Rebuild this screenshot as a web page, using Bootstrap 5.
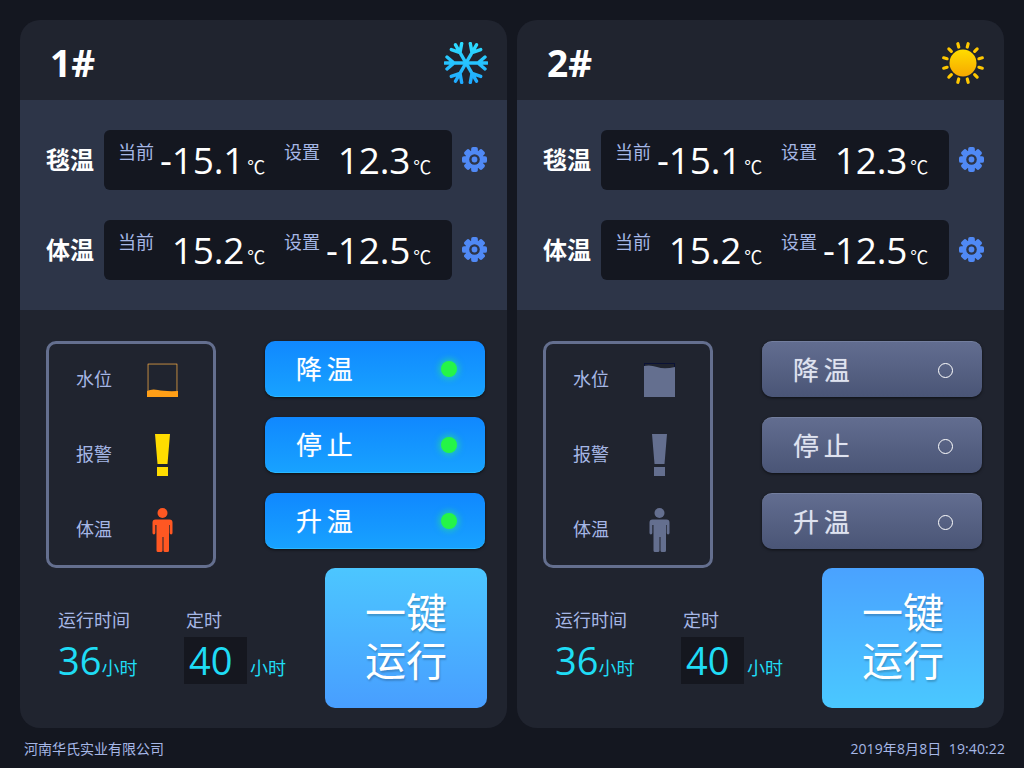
<!DOCTYPE html>
<html lang="zh-CN">
<head>
    <meta charset="UTF-8">
    <meta name="viewport" content="width=device-width, initial-scale=1">
    <title>河南华氏实业</title>
    <link href="https://cdn.jsdelivr.net/npm/bootstrap@5.3.0/dist/css/bootstrap.min.css" rel="stylesheet">
    <style>
        html, body { height: 100%; }
        body { background: #141720; color: #a6b7e6; font-family: "Open Sans", "Noto Sans CJK SC", sans-serif; padding: 20px 20px 0 20px; overflow: hidden; }
        .panels { gap: 10px; }
        .panel { width: 487px; height: 708px; background: #20242f; border-radius: 20px; overflow: hidden; }
        .panel-head { height: 80px; padding: 0 19px 0 30px; }
        .panel-no { font-family: "Open Sans", sans-serif; font-size: 37px; font-weight: 700; color: #fff; line-height: 1; margin-top: 4px; }
        .head-icon { margin-top: 6px; }
        .band { height: 210px; background: #2d3548; padding: 30px 20px 0 26px; }
        .temp-row { height: 60px; margin-bottom: 30px; }
        .temp-name { width: 58px; font-size: 24px; font-weight: 700; color: #fff; line-height: 1; }
        .temp-box { width: 348px; height: 60px; background: #141720; border-radius: 6px; padding: 0 21px 0 14px; margin-right: 10px; }
        .temp-cell { width: 147px; }
        .temp-cell + .temp-cell { margin-left: 19px; }
        .temp-label { font-size: 18px; line-height: 24px; margin-top: 10px; }
        .temp-val { margin-left: auto; color: #fff; font-size: 37px; font-weight: 400; line-height: 60px; white-space: nowrap; letter-spacing: -.2px; }
        .temp-val small { font-size: 18px; margin-left: 3px; }
        .gear-ico { margin-top: -2px; }
        .lower { padding: 31px 20px 0 26px; }
        .stat-box { width: 170px; height: 227px; border: 3px solid #646f8f; border-radius: 10px; padding: 0 34px 0 27px; }
        .stat-row { height: 75px; }
        .stat-row span { font-size: 18px; }
        .stat-icon { width: 33px; }
        .mode-list { margin-left: 49px; width: 220px; gap: 20px; }
        .mode-btn { height: 56px; border-radius: 10px; padding: 1px 28px 0 31px; color: #fff; font-size: 26px; letter-spacing: -1px; text-shadow: 0 0 1px rgba(255,255,255,.45); box-shadow: 0 1px 3px rgba(0,0,0,.6); }
        .mode-on { background: linear-gradient(#1088ff, #18a2ff); border-bottom: 1px solid #2ab8ff; }
        .mode-off { background: linear-gradient(#626d90, #4a5576); color: #dfe3f0; border-top: 1px solid #737e9e; }
        .lamp { width: 16px; height: 16px; border-radius: 50%; }
        .lamp-on { background: #25f547; box-shadow: 0 0 6px 2px rgba(40,240,120,.55); }
        .lamp-off { width: 15px; height: 15px; border: 1.5px solid #fff; margin-right: 1px; }
        .time-area { padding: 41px 0 0 12px; }
        .time-col1 { width: 126px; }
        .time-label { font-size: 18px; line-height: 22px; }
        .time-col2 .time-label { padding-left: 2px; }
        .time-val { color: #1fdcf5; font-size: 38px; line-height: 47px; margin-top: 6px; white-space: nowrap; }
        .time-val small { font-size: 18px; }
        .time-input { display: inline-block; width: 63px; height: 47px; background: #15171f; padding-left: 5px; margin-right: 3px; }
        .one-key { width: 162px; height: 140px; border-radius: 10px; color: #fff; font-family: "Liberation Sans", "Noto Sans CJK SC", sans-serif; font-size: 41px; line-height: 48px; text-shadow: 1px 2px 2px rgba(0,0,0,.2); }
        .key-a { background: linear-gradient(#4cc6ff, #489eff); }
        .key-b { background: linear-gradient(#4aa2ff, #4ac8ff); }
        .foot { height: 40px; margin: 0 -1px 0 4px; font-size: 14px; }
        .foot-date { letter-spacing: .1px; }
    </style>
</head>
<body>

<svg width="0" height="0" class="d-block position-absolute">
    <defs>
        <linearGradient id="snowGrad" x1="0" y1="0" x2="0" y2="1"><stop offset="0" stop-color="#2ee2ff"/><stop offset="1" stop-color="#1ea4ff"/></linearGradient>
        <linearGradient id="sunGrad" x1="0" y1="0" x2="0" y2="1"><stop offset="0" stop-color="#ffdc00"/><stop offset="1" stop-color="#f7a800"/></linearGradient>
        <mask id="snowMask" maskUnits="userSpaceOnUse" x="-24" y="-24" width="48" height="48">
            <g fill="none" stroke="#fff" stroke-width="3.400" stroke-linecap="round" stroke-linejoin="round">
                <path d="M-21 0H21M-19 -6l7 6l-7 6M19 -6l-7 6l7 6"/>
                <path transform="rotate(60)" d="M-21 0H21M-19 -6l7 6l-7 6M19 -6l-7 6l7 6"/>
                <path transform="rotate(120)" d="M-21 0H21M-19 -6l7 6l-7 6M19 -6l-7 6l7 6"/>
            </g>
        </mask>
        <symbol id="gear" viewBox="0 0 26 26">
            <g fill="#5089f5">
                <rect x="9.500" y="0" width="7" height="26" rx="2"/>
                <rect x="9.500" y="0" width="7" height="26" rx="2" transform="rotate(45 13 13)"/>
                <rect x="9.500" y="0" width="7" height="26" rx="2" transform="rotate(90 13 13)"/>
                <rect x="9.500" y="0" width="7" height="26" rx="2" transform="rotate(135 13 13)"/>
                <circle cx="13" cy="13" r="9.500"/>
            </g>
            <circle cx="13" cy="13" r="5.500" fill="#2d3548"/>
            <circle cx="13" cy="13" r="3" fill="#5089f5"/>
        </symbol>
        <symbol id="person" viewBox="0 0 20 44">
            <circle cx="10" cy="5" r="5"/>
            <path d="M3 11.500h14a3 3 0 0 1 3 3V25a1.300 1.300 0 0 1-2.800 0V17h-.7v25.500a1.500 1.500 0 0 1-1.500 1.500h-2.500a1.500 1.500 0 0 1-1.500-1.500V29h-1v13.500a1.500 1.500 0 0 1-1.500 1.500H5.500A1.500 1.500 0 0 1 4 42.500V17h-1.200v8a1.300 1.300 0 0 1-2.800 0V14.500a3 3 0 0 1 3-3z"/>
        </symbol>
        <symbol id="alarm" viewBox="0 0 16 42">
            <path d="M.5 0h15l-2.500 30h-10zM2.500 33h11v9h-11z"/>
        </symbol>
    </defs>
</svg>

<div class="d-flex panels">

    <div class="panel">
        <div class="panel-head d-flex align-items-center justify-content-between">
            <div class="panel-no">1#</div>
            <svg class="head-icon" width="44" height="42" viewBox="-22 -21 44 42">
                <rect x="-24" y="-24" width="48" height="48" fill="url(#snowGrad)" mask="url(#snowMask)"/>
            </svg>
        </div>
        <div class="band">
            <div class="temp-row d-flex align-items-center">
                <div class="temp-name">毯温</div>
                <div class="temp-box d-flex">
                    <div class="temp-cell d-flex"><div class="temp-label">当前</div><div class="temp-val">-15.1<small>℃</small></div></div>
                    <div class="temp-cell d-flex"><div class="temp-label">设置</div><div class="temp-val">12.3<small>℃</small></div></div>
                </div>
                <svg class="gear-ico" width="25" height="25"><use href="#gear"/></svg>
            </div>
            <div class="temp-row d-flex align-items-center">
                <div class="temp-name">体温</div>
                <div class="temp-box d-flex">
                    <div class="temp-cell d-flex"><div class="temp-label">当前</div><div class="temp-val">15.2<small>℃</small></div></div>
                    <div class="temp-cell d-flex"><div class="temp-label">设置</div><div class="temp-val">-12.5<small>℃</small></div></div>
                </div>
                <svg class="gear-ico" width="25" height="25"><use href="#gear"/></svg>
            </div>
        </div>
        <div class="lower">
            <div class="d-flex">
                <div class="stat-box d-flex flex-column justify-content-center">
                    <div class="stat-row flex-shrink-0 d-flex align-items-center justify-content-between">
                        <span>水位</span>
                        <svg class="stat-icon" width="33" height="34" viewBox="0 0 31 34"><rect x=".5" y=".5" width="30" height="33" fill="none" stroke="#0b1236"/><rect x="1" y="1" width="29" height="32" fill="none" stroke="#f5b040" stroke-width=".8"/><path d="M0 28q5-2.500 11-1t20 1V34H0z" fill="#ff9f17"/></svg>
                    </div>
                    <div class="stat-row flex-shrink-0 d-flex align-items-center justify-content-between">
                        <span>报警</span>
                        <svg class="stat-icon" width="16" height="42" fill="#ffdc00"><use href="#alarm"/></svg>
                    </div>
                    <div class="stat-row flex-shrink-0 d-flex align-items-center justify-content-between">
                        <span>体温</span>
                        <svg class="stat-icon" width="20" height="44" fill="#ff5722"><use href="#person"/></svg>
                    </div>
                </div>
                <div class="mode-list d-flex flex-column">
                    <div class="mode-btn mode-on d-flex align-items-center justify-content-between"><span>降 温</span><i class="lamp lamp-on"></i></div>
                    <div class="mode-btn mode-on d-flex align-items-center justify-content-between"><span>停 止</span><i class="lamp lamp-on"></i></div>
                    <div class="mode-btn mode-on d-flex align-items-center justify-content-between"><span>升 温</span><i class="lamp lamp-on"></i></div>
                </div>
            </div>
            <div class="d-flex justify-content-between">
                <div class="time-area d-flex">
                    <div class="time-col1">
                        <div class="time-label">运行时间</div>
                        <div class="time-val">36<small>小时</small></div>
                    </div>
                    <div class="time-col2">
                        <div class="time-label">定时</div>
                        <div class="time-val"><span class="time-input">40</span><small>小时</small></div>
                    </div>
                </div>
                <div class="one-key key-a d-flex align-items-center justify-content-center text-center"><div>一键<br>运行</div></div>
            </div>
        </div>
    </div>

    <div class="panel">
        <div class="panel-head d-flex align-items-center justify-content-between">
            <div class="panel-no">2#</div>
            <svg class="head-icon" width="44" height="44" viewBox="-22 -22 44 44" fill="none">
                <circle r="13.500" fill="url(#sunGrad)"/>
                <g stroke="#ffc800" stroke-width="3.200" stroke-linecap="round">
                    <path transform="rotate(15)" d="M0-16.500V-20"/><path transform="rotate(45)" d="M0-16.500V-20"/><path transform="rotate(75)" d="M0-16.500V-20"/>
                    <path transform="rotate(105)" d="M0-16.500V-20"/><path transform="rotate(135)" d="M0-16.500V-20"/><path transform="rotate(165)" d="M0-16.500V-20"/>
                    <path transform="rotate(195)" d="M0-16.500V-20"/><path transform="rotate(225)" d="M0-16.500V-20"/><path transform="rotate(255)" d="M0-16.500V-20"/>
                    <path transform="rotate(285)" d="M0-16.500V-20"/><path transform="rotate(315)" d="M0-16.500V-20"/><path transform="rotate(345)" d="M0-16.500V-20"/>
                </g>
            </svg>
        </div>
        <div class="band">
            <div class="temp-row d-flex align-items-center">
                <div class="temp-name">毯温</div>
                <div class="temp-box d-flex">
                    <div class="temp-cell d-flex"><div class="temp-label">当前</div><div class="temp-val">-15.1<small>℃</small></div></div>
                    <div class="temp-cell d-flex"><div class="temp-label">设置</div><div class="temp-val">12.3<small>℃</small></div></div>
                </div>
                <svg class="gear-ico" width="25" height="25"><use href="#gear"/></svg>
            </div>
            <div class="temp-row d-flex align-items-center">
                <div class="temp-name">体温</div>
                <div class="temp-box d-flex">
                    <div class="temp-cell d-flex"><div class="temp-label">当前</div><div class="temp-val">15.2<small>℃</small></div></div>
                    <div class="temp-cell d-flex"><div class="temp-label">设置</div><div class="temp-val">-12.5<small>℃</small></div></div>
                </div>
                <svg class="gear-ico" width="25" height="25"><use href="#gear"/></svg>
            </div>
        </div>
        <div class="lower">
            <div class="d-flex">
                <div class="stat-box d-flex flex-column justify-content-center">
                    <div class="stat-row flex-shrink-0 d-flex align-items-center justify-content-between">
                        <span>水位</span>
                        <svg class="stat-icon" width="33" height="34" viewBox="0 0 31 34"><rect x=".5" y=".5" width="30" height="33" fill="none" stroke="#0b1236"/><path d="M0 3q6-1.500 13 1t18 0V34H0z" fill="#646f8f"/></svg>
                    </div>
                    <div class="stat-row flex-shrink-0 d-flex align-items-center justify-content-between">
                        <span>报警</span>
                        <svg class="stat-icon" width="16" height="42" fill="#646f8f"><use href="#alarm"/></svg>
                    </div>
                    <div class="stat-row flex-shrink-0 d-flex align-items-center justify-content-between">
                        <span>体温</span>
                        <svg class="stat-icon" width="20" height="44" fill="#646f8f"><use href="#person"/></svg>
                    </div>
                </div>
                <div class="mode-list d-flex flex-column">
                    <div class="mode-btn mode-off d-flex align-items-center justify-content-between"><span>降 温</span><i class="lamp lamp-off"></i></div>
                    <div class="mode-btn mode-off d-flex align-items-center justify-content-between"><span>停 止</span><i class="lamp lamp-off"></i></div>
                    <div class="mode-btn mode-off d-flex align-items-center justify-content-between"><span>升 温</span><i class="lamp lamp-off"></i></div>
                </div>
            </div>
            <div class="d-flex justify-content-between">
                <div class="time-area d-flex">
                    <div class="time-col1">
                        <div class="time-label">运行时间</div>
                        <div class="time-val">36<small>小时</small></div>
                    </div>
                    <div class="time-col2">
                        <div class="time-label">定时</div>
                        <div class="time-val"><span class="time-input">40</span><small>小时</small></div>
                    </div>
                </div>
                <div class="one-key key-b d-flex align-items-center justify-content-center text-center"><div>一键<br>运行</div></div>
            </div>
        </div>
    </div>

</div>

<div class="foot d-flex align-items-center justify-content-between">
    <div>河南华氏实业有限公司</div>
    <div class="foot-date">2019年8月8日&nbsp;&nbsp;19:40:22</div>
</div>

</body>
</html>
